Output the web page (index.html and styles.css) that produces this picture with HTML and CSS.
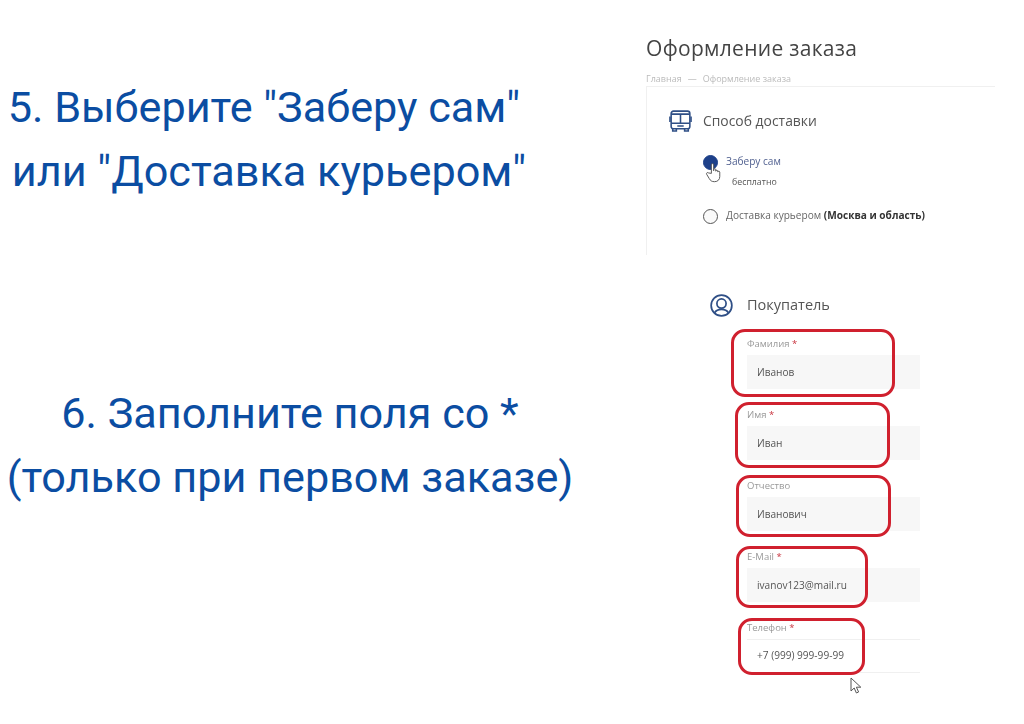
FILE: index.html
```html
<!DOCTYPE html>
<html lang="ru">
<head>
  <meta charset="UTF-8" />
  <meta name="viewport" content="width=device-width, initial-scale=1.0" />
  <title>Оформление заказа</title>
  <link rel="stylesheet" href="styles.css">
</head>
<body>
  <div class="step step-delivery">
    <div class="step-text">
      <div>5. Выберите "Заберу сам"</div>
      <div class="shift">или "Доставка курьером"</div>
    </div>
    <div class="shot">
      <h1>Оформление заказа</h1>
      <div class="crumbs"><span>Главная</span><span>—</span><span>Оформление заказа</span></div>
      <div class="card">
        <div class="section-head">
          <svg class="bus-icon" viewBox="0 0 24 24" fill="none" stroke="#2f4f86" stroke-width="1.700">
            <rect x="1.800" y="1.200" width="20.400" height="19.300" rx="2.500" />
            <path d="M1.800 4.500h20.400M1.800 14.500h20.400M12 4.500v10M0.500 7v6M23.500 7v6M3.500 20.500V23h4v-2.500M16.500 20.500V23h4v-2.500M8.500 17.500h7" />
          </svg>
          <span>Способ доставки</span>
        </div>
        <div class="option">
          <span class="radio on"></span>
          <span class="option-label active">Заберу сам</span>
          <svg class="hand" viewBox="0 0 20 24" fill="#fff" stroke="#555" stroke-width="1.100" stroke-linejoin="round">
            <path d="M7 13V3.200c0-1.700 2.600-1.700 2.600 0V10l0-1.200c0-1.500 2.400-1.500 2.400 0V10.500c0-1.400 2.300-1.400 2.300 0v1c0-1.300 2.300-1.300 2.300 0v5c0 3.500-2.200 6-6 6-3.200 0-4.700-1.200-6-3.500l-3-5c-.8-1.500 1-2.600 2.200-1.500z" />
          </svg>
        </div>
        <div class="option-note">бесплатно</div>
        <div class="option option-second">
          <span class="radio"></span>
          <span class="option-label">Доставка курьером <b>(Москва и область)</b></span>
        </div>
      </div>
    </div>
  </div>

  <div class="step step-buyer">
    <div class="step-text">
      <div>6. Заполните поля со *</div>
      <div>(только при первом заказе)</div>
    </div>
    <div class="shot buyer">
      <div class="section-head">
        <svg class="person-icon" viewBox="0 0 24 24" fill="none" stroke="#2f4f86" stroke-width="1.800">
          <circle cx="12" cy="12" r="10.800" />
          <circle cx="12" cy="10" r="4.800" />
          <path d="M4.800 19.500c1.500-2.500 4-3.500 7.200-3.500s5.700 1 7.200 3.500" />
        </svg>
        <span>Покупатель</span>
      </div>
      <div class="field">
        <label>Фамилия <i>*</i></label>
        <div class="input">Иванов</div>
        <div class="mark mark-surname"></div>
      </div>
      <div class="field">
        <label>Имя <i>*</i></label>
        <div class="input">Иван</div>
        <div class="mark mark-name"></div>
      </div>
      <div class="field">
        <label>Отчество</label>
        <div class="input">Иванович</div>
        <div class="mark mark-patronymic"></div>
      </div>
      <div class="field">
        <label>E-Mail <i>*</i></label>
        <div class="input">ivanov123@mail.ru</div>
        <div class="mark mark-email"></div>
      </div>
      <div class="field">
        <label>Телефон <i>*</i></label>
        <div class="input input-empty">+7 (999) 999-99-99</div>
        <div class="mark mark-phone"></div>
        <svg class="arrow" viewBox="0 0 13 17" fill="#fff" stroke="#555" stroke-width="1" stroke-linejoin="round">
          <path d="M1 1v13l3.200-3 2.200 5 2.200-1-2.200-4.800h4.400z" />
        </svg>
      </div>
    </div>
  </div>
</body>
</html>
```
FILE: styles.css
```css
html, body { margin: 0; height: 724px; overflow: hidden; background: #fff; }
body { font-family: "Open Sans", sans-serif; color: #444; }

.step { display: grid; grid-template-columns: 646px 1fr; }
.step-delivery { height: 290px; }
.step-buyer { height: 434px; }

.step-text { font-family: Roboto, sans-serif; font-size: 43.200px; line-height: 64px; color: #0b4da2; text-align: center; white-space: nowrap; }
.step-delivery .step-text { padding: 76px 118px 0 0; }
.step-buyer .step-text { padding: 92px 66px 0 0; }
.shift { padding-left: 10px; }

.shot { filter: blur(0.35px); }

h1 { margin: 0; padding-top: 35px; font-size: 21px; line-height: 26px; font-weight: 400; color: #444; letter-spacing: 0.3px; }
.crumbs { display: flex; gap: 6px; margin-top: 12px; font-size: 9px; line-height: 12px; color: #bbb; }

.card { width: 349px; height: 169px; margin-top: 1px; padding: 23px 0 0 22px; box-sizing: border-box; border-top: 1px solid #f0f0f0; border-left: 1px solid #f0f0f0; }

.section-head { display: flex; align-items: center; font-size: 13.900px; line-height: 22px; color: #555; }
.bus-icon { width: 23px; height: 22px; margin-right: 11px; }
.person-icon { width: 23px; height: 23px; margin-right: 14px; }

.option { position: relative; display: flex; align-items: flex-start; margin: 23px 0 0 34px; font-size: 10.100px; line-height: 13px; color: #666; }
.option-second { margin-top: 20px; }
.radio { flex: none; width: 13px; height: 13px; margin-right: 8px; border: 1px solid #555; border-radius: 50%; background: #fafafa; }
.radio.on { border-color: #1d4089; background: #1d4089; }
.option-label { white-space: nowrap; }
.option-label.active { color: #4f5f8f; }
.option-label b { color: #333; }
.option-note { margin: 6px 0 0 63px; font-size: 8.800px; line-height: 13px; color: #555; }
.hand { position: absolute; left: 1px; top: 7px; width: 20px; height: 21px; }

.buyer { padding: 4px 0 0 64px; }
.buyer .section-head { height: 22px; font-size: 14.500px; }

.field { position: relative; width: 173px; height: 71px; margin-left: 37px; }
.buyer .section-head + .field { margin-top: 20px; }
label { display: block; font-size: 9.500px; line-height: 15px; color: #999; }
label i { font-style: normal; color: #c9343f; }
.input { height: 34px; margin-top: 4px; padding-left: 10px; line-height: 34px; font-size: 10.100px; color: #555; background: #f7f7f7; }
.input-empty { box-sizing: border-box; line-height: 30px; background: #fff; border-top: 1px solid #f0f0f0; border-bottom: 1px solid #f0f0f0; }

/* red marks drawn over the form */
.mark { position: absolute; box-sizing: border-box; border: 3.500px solid #d0202e; border-radius: 14px; }
.mark-surname { left: -16px; top: -7px; width: 164px; height: 68px; }
.mark-name { left: -12px; top: -5px; width: 155px; height: 66px; }
.mark-patronymic { left: -11px; top: -3px; width: 155px; height: 62px; }
.mark-email { left: -11px; top: -3px; width: 132px; height: 62px; }
.mark-phone { left: -9px; top: -2px; width: 127px; height: 57px; }

.arrow { position: absolute; left: 103px; top: 57px; width: 13px; height: 17px; }
```
